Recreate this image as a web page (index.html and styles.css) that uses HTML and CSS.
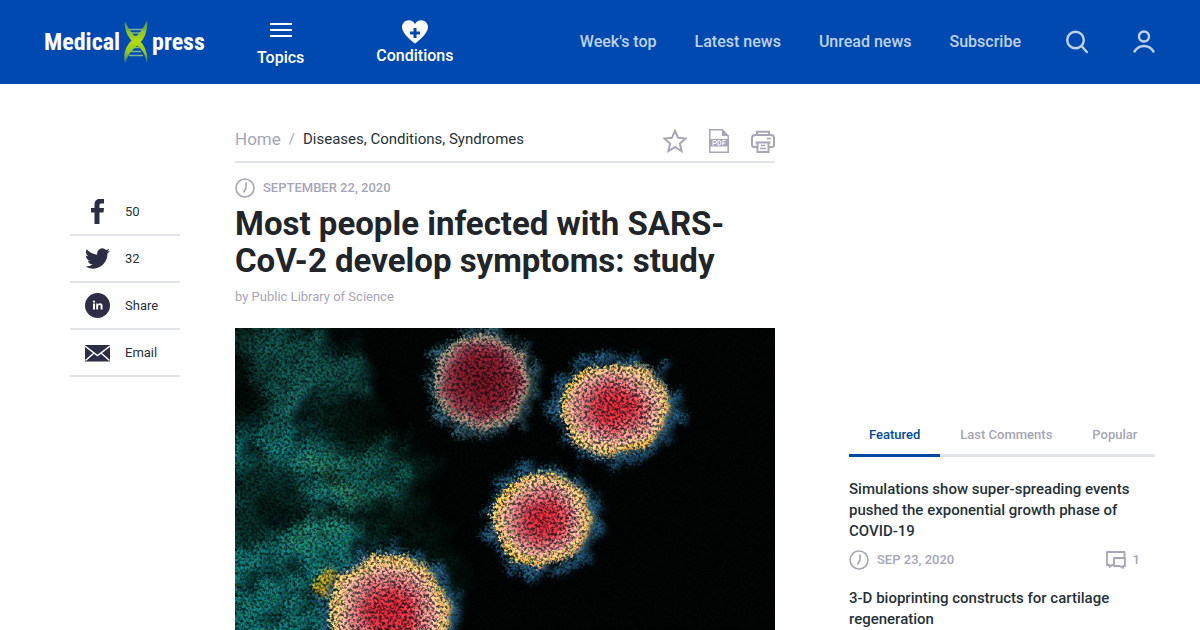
FILE: index.html
```html
<!DOCTYPE html>
<html lang="en">
<head>
<meta charset="utf-8">
<title>Most people infected with SARS-CoV-2 develop symptoms: study</title>
<meta name="viewport" content="width=device-width, initial-scale=1">
<link rel="stylesheet" href="styles.css">
</head>
<body>
<header class="site-header">
  <a class="logo" href="#">
    <span>Medical</span>
    <svg class="logo-dna" viewBox="0 0 24 42" aria-hidden="true">
      <defs>
        <linearGradient id="dna" x1="0" y1="0" x2="0" y2="1">
          <stop offset="0" stop-color="#6fa53a" stop-opacity=".4"/>
          <stop offset=".25" stop-color="#8cc52a"/>
          <stop offset=".5" stop-color="#b4dc0c"/>
          <stop offset=".78" stop-color="#8cc52a"/>
          <stop offset="1" stop-color="#6fa53a" stop-opacity=".35"/>
        </linearGradient>
      </defs>
      <path d="M5 8.500h14M7 12h10M9 15.500h6M9 26.500h6M7 30.500h10M5 34.500h14" stroke="#7eb2a0" stroke-width="1.300" fill="none"/>
      <path d="M1 1C1 9 5 17 11 22C17 26 22 32 23 41C23 31 20 24 14 19C8 14 4 9 1 1Z" fill="url(#dna)" stroke="url(#dna)" stroke-width="1.200"/>
      <path d="M23 0C23 10 20 18 14 23C8 28 4 32 1 41C0 32 3 24 9 19C15 14 20 9 23 0Z" fill="url(#dna)" stroke="url(#dna)" stroke-width="1.200"/>
    </svg>
    <span>press</span>
  </a>
  <button class="menu-button menu-topics" type="button">
    <svg width="22" height="16" viewBox="0 0 22 16" aria-hidden="true"><path d="M0 2h22M0 8h22M0 14h22" stroke="#fff" stroke-width="2"/></svg>
    <span>Topics</span>
  </button>
  <button class="menu-button menu-conditions" type="button">
    <svg width="26" height="24" viewBox="0 0 26 24" aria-hidden="true"><path d="M13 23.500C11 22 0 13.800 0 7.200C0 3 3 .2 6.800.2C9.500.2 11.800 1.600 13 4C14.200 1.600 16.500.2 19.200.2C23 .2 26 3 26 7.200C26 13.800 15 22 13 23.500Z" fill="#fff"/><path d="M13 8v10M8 13h10" stroke="#0049b0" stroke-width="3"/></svg>
    <span>Conditions</span>
  </button>
  <nav class="site-nav">
    <a href="#">Week's top</a>
    <a href="#">Latest news</a>
    <a href="#">Unread news</a>
    <a href="#">Subscribe</a>
  </nav>
  <div class="header-tools">
    <button class="icon-button" type="button" aria-label="Search">
      <svg width="22" height="24" viewBox="0 0 22 24" fill="none" stroke="#bfd1eb" stroke-width="2.400" stroke-linecap="round"><circle cx="9.500" cy="10" r="8.300"/><path d="M15.500 16l5.300 6"/></svg>
    </button>
    <button class="icon-button" type="button" aria-label="Account">
      <svg width="22" height="24" viewBox="0 0 22 24" fill="none" stroke="#bfd1eb" stroke-width="2.400" stroke-linecap="round"><circle cx="11" cy="6.500" r="5"/><path d="M1.500 21.500C4 17.500 7.500 16 11 16s7 1.500 9.500 5.500"/></svg>
    </button>
  </div>
</header>

<main class="page">
  <ul class="share">
    <li><a href="#"><svg viewBox="0 0 25 25" aria-hidden="true"><path d="M9.500 25V13.500H6V9h3.500V6C9.500 1.800 11.500 0 15 0H19v4.500h-2.500c-1.400 0-2 .6-2 2V9h4.500l-.5 4.500H14.500V25Z"/></svg><span>50</span></a></li>
    <li><a href="#"><svg viewBox="0 0 24 24" aria-hidden="true"><path d="M23.950 4.570a10 10 0 0 1-2.820.77 4.960 4.960 0 0 0 2.160-2.720c-.950.550-2 .950-3.120 1.180a4.920 4.920 0 0 0-8.390 4.480C7.690 8.100 4.070 6.130 1.640 3.160a4.820 4.820 0 0 0-.67 2.480c0 1.710.87 3.210 2.190 4.100a4.900 4.900 0 0 1-2.230-.62v.060a4.920 4.920 0 0 0 3.950 4.830 5 5 0 0 1-2.210.080 4.940 4.940 0 0 0 4.600 3.420A9.870 9.870 0 0 1 0 19.540a13.990 13.990 0 0 0 7.560 2.210c9.050 0 14-7.500 14-13.980 0-.21 0-.42-.020-.63a9.940 9.940 0 0 0 2.410-2.570Z"/></svg><span>32</span></a></li>
    <li><a href="#"><svg viewBox="0 0 25 25" aria-hidden="true"><circle cx="12.500" cy="12.500" r="12.500"/><g fill="#fff"><circle cx="9" cy="8.700" r="1.100"/><path d="M8 10.500h2v6H8zM11.200 10.500h1.900v.9c.4-.7 1.100-1.100 2-1.100 1.800 0 2.500 1.200 2.500 2.800v3.400h-2v-3.100c0-.8-.3-1.400-1.100-1.400s-1.400.6-1.400 1.500v3h-1.900z"/></g></svg><span>Share</span></a></li>
    <li><a href="#"><svg viewBox="0 0 25 25" aria-hidden="true"><path d="M0 5h25v16.500H0Z"/><path d="M0 6l12.500 9.500L25 6M.5 20.500L9 13M24.500 20.500L16 13" fill="none" stroke="#fff" stroke-width="1.400"/></svg><span>Email</span></a></li>
  </ul>

  <article class="article">
    <div class="article-bar">
      <nav class="breadcrumb" aria-label="Breadcrumb">
        <a class="crumb-home" href="#">Home</a>
        <span class="crumb-slash">/</span>
        <a class="crumb-current" href="#">Diseases, Conditions, Syndromes</a>
      </nav>
      <div class="article-tools">
        <button class="icon-button" type="button" aria-label="Save"><svg width="24" height="24" viewBox="0 0 24 24"><path d="M12 1.800l3.100 7 7.500.7-5.700 5 1.700 7.500L12 18.100 5.400 22l1.700-7.500-5.700-5 7.500-.7Z" fill="none" stroke="#a6a6b6" stroke-width="2"/></svg></button>
        <button class="icon-button" type="button" aria-label="PDF"><svg width="20" height="24" viewBox="0 0 20 24"><path d="M.8.800H13L19.200 7v16.200H.8Z" fill="none" stroke="#a6a6b6" stroke-width="1.500"/><path d="M13 0v7h7zM0 10h20v7.500H0z" fill="#a6a6b6"/><path d="M4 16.500v-5h2q1.500 0 1.500 1.500t-1.500 1.500H4M9 11.500h1q2 0 2 2.300T10 16H9ZM13.800 16.500v-5h3M13.800 14h2.500" fill="none" stroke="#fff" stroke-width="1"/></svg></button>
        <button class="icon-button" type="button" aria-label="Print"><svg width="24" height="24" viewBox="0 0 24 24" fill="none" stroke="#a6a6b6" stroke-width="2"><path d="M6 6V2.800h12V6M6 18H3q-2 0-2-2V9q0-3 3-3h16q3 0 3 3v7q0 2-2 2h-3M4.500 13.500h15M6.500 13.500V23h11v-9.500"/><path d="M10 16.500h4M9 19.500h6M16 9.500h4" stroke-width="1.500"/></svg></button>
      </div>
    </div>
    <p class="date">
      <svg class="clock" viewBox="0 0 20 20" aria-hidden="true"><circle cx="10" cy="10" r="9"/><path d="M11 4.500V10l-2.500 4.500"/></svg>
      <time datetime="2020-09-22">SEPTEMBER 22, 2020</time>
    </p>
    <h1 class="title">Most people infected with SARS-CoV-2 develop symptoms: study</h1>
    <p class="byline">by Public Library of Science</p>
    <svg class="photo" viewBox="0 0 540 302" role="img" aria-label="Electron micrograph of SARS-CoV-2 virus particles">
      <defs>
        <filter id="grain" x="0" y="0" width="540" height="302" filterUnits="userSpaceOnUse" color-interpolation-filters="sRGB">
          <feTurbulence type="fractalNoise" baseFrequency=".36" numOctaves="3" seed="7" result="n"/>
          <feDisplacementMap in="SourceGraphic" in2="n" scale="14" xChannelSelector="R" yChannelSelector="G" result="d"/>
          <feColorMatrix in="n" type="matrix" values="3.600 0 0 0 -1.200  2.600 1 0 0 -1.200  2.600 0 1 0 -1.200  0 0 0 0 1" result="g"/>
          <feComposite in="d" in2="g" operator="arithmetic" k1=".95" k2=".4" k3="0" k4="0"/>
        </filter>
        <filter id="cloud" x="-60" y="-60" width="460" height="440" filterUnits="userSpaceOnUse" color-interpolation-filters="sRGB">
          <feTurbulence type="fractalNoise" baseFrequency=".035" numOctaves="5" seed="4" result="n"/>
          <feGaussianBlur in="SourceGraphic" stdDeviation="8" result="b"/>
          <feDisplacementMap in="b" in2="n" scale="44" xChannelSelector="R" yChannelSelector="G" result="d"/>
          <feColorMatrix in="n" type="matrix" values="0 0 2.400 0 -.4  0 0 2.400 0 -.3  0 0 2.400 0 -.3  0 0 0 0 1" result="m"/>
          <feComposite in="d" in2="m" operator="arithmetic" k1=".9" k2=".25" k3="0" k4="0"/>
        </filter>
        <filter id="fringe" x="-60" y="-60" width="660" height="460" filterUnits="userSpaceOnUse" color-interpolation-filters="sRGB">
          <feTurbulence type="fractalNoise" baseFrequency=".07" numOctaves="3" seed="11" result="n"/>
          <feDisplacementMap in="SourceGraphic" in2="n" scale="26" xChannelSelector="R" yChannelSelector="G" result="d"/>
          <feGaussianBlur in="d" stdDeviation="2.600"/>
        </filter>
        <filter id="soft" x="-60" y="-60" width="660" height="460" filterUnits="userSpaceOnUse" color-interpolation-filters="sRGB">
          <feTurbulence type="fractalNoise" baseFrequency=".045" numOctaves="3" seed="21" result="n"/>
          <feDisplacementMap in="SourceGraphic" in2="n" scale="14" xChannelSelector="R" yChannelSelector="G" result="d"/>
          <feGaussianBlur in="d" stdDeviation="1.600"/>
        </filter>
        <radialGradient id="dark">
          <stop offset="0" stop-color="#5c101a"/><stop offset=".5" stop-color="#701a28"/>
          <stop offset=".72" stop-color="#7c3642"/><stop offset=".86" stop-color="#94716c"/><stop offset=".94" stop-color="#857e69"/><stop offset="1" stop-color="#3d5860"/>
        </radialGradient>
        <radialGradient id="bright">
          <stop offset="0" stop-color="#b11f2c"/><stop offset=".34" stop-color="#b22f3c"/>
          <stop offset=".55" stop-color="#b8646a"/><stop offset=".76" stop-color="#cb9684"/><stop offset=".89" stop-color="#dfae66"/><stop offset=".96" stop-color="#b49558"/><stop offset="1" stop-color="#4b7080"/>
        </radialGradient>
      </defs>
      <rect width="540" height="302" fill="#010302"/>
      <g filter="url(#grain)">
        <rect width="540" height="302" fill="#010403"/>
        <g filter="url(#cloud)">
          <path d="M-40-40H90L150 100 190 170 240 260 200 310H-40Z" fill="#03100b"/>
          <path d="M10 14Q40-12 92 2Q132 24 126 62Q108 78 84 74L62 96 32 92Q38 60 18 48Z" fill="#0d3c38"/>
          <circle cx="58" cy="76" r="18" fill="#155350"/>
          <path d="M-30 108Q28 88 82 104Q120 130 136 194Q136 240 100 330H-40Z" fill="#0d5553"/>
          <path d="M118 126Q162 104 190 134Q194 154 170 166Q144 178 118 184Z" fill="#0d4640"/>
          <path d="M-6 142Q20 126 58 142Q84 160 74 190Q50 204 30 212Q10 216-10 204Z" fill="#062420"/>
          <path d="M76 136Q104 144 128 180" fill="none" stroke="#3e6a40" stroke-width="10"/>
          <path d="M62 210Q90 190 116 200" fill="none" stroke="#1d6653" stroke-width="16"/>
          <path d="M10 170l30 12 26 4" fill="none" stroke="#031009" stroke-width="14"/>
        </g>
        <g filter="url(#fringe)" fill="none" stroke="#1f4d6b">
          <ellipse cx="248" cy="53" rx="50" ry="51" stroke-width="6" stroke="#284a55"/>
          <ellipse cx="248" cy="53" rx="54" ry="55" stroke-width="8" stroke-dasharray="12 27 7 19" stroke="#2e5162"/>
          <ellipse cx="380" cy="80" rx="56" ry="48" stroke-width="9"/>
          <ellipse cx="380" cy="80" rx="62" ry="54" stroke-width="11" stroke-dasharray="12 17 7 22"/>
          <ellipse cx="308" cy="192" rx="50" ry="49" stroke-width="9"/>
          <ellipse cx="308" cy="192" rx="56" ry="55" stroke-width="10" stroke-dasharray="12 22 8 17"/>
          <ellipse cx="155" cy="286" rx="61" ry="60" stroke-width="10"/>
          <ellipse cx="155" cy="286" rx="67" ry="66" stroke-width="11" stroke-dasharray="14 22 8 17"/>
          <path d="M86 265L94 249 110 246" stroke="#b88f20" stroke-width="9"/>
        </g>
        <g filter="url(#soft)">
          <ellipse cx="248" cy="53" rx="49" ry="50" fill="url(#dark)"/>
          <ellipse cx="380" cy="80" rx="56" ry="47" fill="url(#bright)"/>
          <ellipse cx="308" cy="192" rx="49" ry="48" fill="url(#bright)"/>
          <ellipse cx="155" cy="286" rx="61" ry="60" fill="url(#bright)"/>
          <path d="M330 84Q326 52 353 42M388 122Q405 120 414 109M265 177Q268 161 281 154M268 218Q282 236 302 236" fill="none" stroke="#d9a538" stroke-width="4"/>
        </g>
      </g>
    </svg>
  </article>

  <aside class="sidebar">
    <div class="tabs" role="tablist">
      <button class="tab tab-active" role="tab" aria-selected="true" type="button">Featured</button>
      <button class="tab" role="tab" aria-selected="false" type="button">Last Comments</button>
      <button class="tab" role="tab" aria-selected="false" type="button">Popular</button>
    </div>
    <section class="news-item">
      <h2 class="news-title"><a href="#">Simulations show super-spreading events pushed the exponential growth phase of COVID-19</a></h2>
      <div class="news-meta">
        <svg class="clock" viewBox="0 0 20 20" aria-hidden="true"><circle cx="10" cy="10" r="9"/><path d="M11 4.500V10l-2.500 4.500"/></svg>
        <time datetime="2020-09-23">SEP 23, 2020</time>
        <a class="comments" href="#" aria-label="1 comment">
          <svg width="20" height="18" viewBox="0 0 20 18" fill="none" stroke="#a6a6b6" stroke-width="1.800" stroke-linejoin="round" aria-hidden="true"><path d="M8 14H6l-2.500 2V14H1V1h17.500v6M8 7h11v8h-2v2l-3-2H8Z"/></svg>
          <span>1</span>
        </a>
      </div>
    </section>
    <section class="news-item">
      <h2 class="news-title"><a href="#">3-D bioprinting constructs for cartilage regeneration</a></h2>
    </section>
  </aside>
</main>
</body>
</html>
```
FILE: styles.css
```css
*, *::before, *::after { box-sizing: border-box; }

body {
  margin: 0;
  background: #fff;
  color: #263238;
  font-family: Roboto, "Liberation Sans", sans-serif;
}

a { color: inherit; text-decoration: none; }

button {
  padding: 0;
  border: 0;
  background: none;
  color: inherit;
  font: inherit;
  cursor: pointer;
}

svg { display: block; flex: none; }

h1, h2, p, ul { margin: 0; padding: 0; }

.site-header {
  display: flex;
  align-items: center;
  height: 84px;
  padding: 0 45px 0 44px;
  background: #0049b0;
  color: #fff;
  font-size: 16px;
  font-weight: 500;
  line-height: 20px;
}

.logo {
  display: flex;
  align-items: center;
  gap: 4px;
  font-family: "Liberation Sans Narrow", "Roboto Condensed", "Open Sans", sans-serif;
  font-size: 24px;
  font-weight: 700;
  line-height: 32px;
}

.logo-dna { width: 24px; height: 42px; }

.menu-button {
  display: flex;
  flex-direction: column;
  align-items: center;
}

.menu-topics { gap: 10px; margin: 5px 0 0 52px; }
.menu-conditions { gap: 2px; margin: 2px 0 0 72px; }

.site-nav {
  display: flex;
  gap: 38px;
  margin-left: auto;
  color: #bfd1eb;
}

.header-tools {
  display: flex;
  gap: 45px;
  margin-left: 45px;
}

.page {
  display: grid;
  grid-template-columns: 110px minmax(0, 1fr) 306px;
  align-items: start;
  padding: 0 45px 0 70px;
}

.share {
  margin-top: 105px;
  list-style: none;
  font-size: 13px;
}

.share a {
  display: flex;
  align-items: center;
  gap: 15px;
  height: 47px;
  padding-left: 15px;
  border-bottom: 2px solid #e3e3ea;
}

.share svg { width: 25px; height: 25px; fill: #2d2d46; }

.article { margin: 36px 74px 0 55px; }

.article-bar {
  display: flex;
  align-items: center;
  justify-content: space-between;
  height: 43px;
  border-bottom: 2px solid #e3e3ea;
}

.breadcrumb {
  display: flex;
  align-items: center;
  gap: 8px;
  padding-bottom: 3px;
  font-size: 15px;
}

.crumb-home { color: #a6a6b6; font-size: 17px; }
.crumb-slash { color: #a6a6b6; }

.article-tools { display: flex; gap: 22px; }

.date {
  display: flex;
  align-items: center;
  gap: 8px;
  margin-top: 15px;
  color: #a6a6b6;
  font-size: 13px;
  font-weight: 500;
  line-height: 20px;
}

.clock {
  width: 20px;
  height: 20px;
  fill: none;
  stroke: #a6a6b6;
  stroke-width: 1.600;
}

.title {
  margin-top: 7px;
  color: #212529;
  font-size: 33px;
  font-weight: 700;
  line-height: 37px;
}

.byline {
  margin-top: 8px;
  color: #a6a6b6;
  font-size: 13px;
  line-height: 20px;
}

.photo {
  width: 100%;
  height: auto;
  margin-top: 21px;
}

.sidebar { margin-top: 330px; }

.tabs {
  display: flex;
  height: 43px;
  border-bottom: 3px solid #e3e3ea;
}

.tab {
  flex: none;
  height: 43px;
  padding: 1px 20px 0;
  border-bottom: 3px solid transparent;
  color: #a6a6b6;
  font-size: 13px;
  font-weight: 500;
  white-space: nowrap;
}

.tab-active { border-color: #0049a0; color: #0049a0; }

.news-item { margin-top: 22px; }
.news-item + .news-item { margin-top: 18px; }

.news-title {
  font-size: 15px;
  font-weight: 500;
  line-height: 21px;
}

.news-meta {
  display: flex;
  align-items: center;
  gap: 8px;
  margin-top: 8px;
  padding-right: 15px;
  color: #a6a6b6;
  font-size: 13px;
  font-weight: 500;
  line-height: 20px;
}

.comments {
  display: flex;
  align-items: center;
  gap: 7px;
  margin-left: auto;
}
```
